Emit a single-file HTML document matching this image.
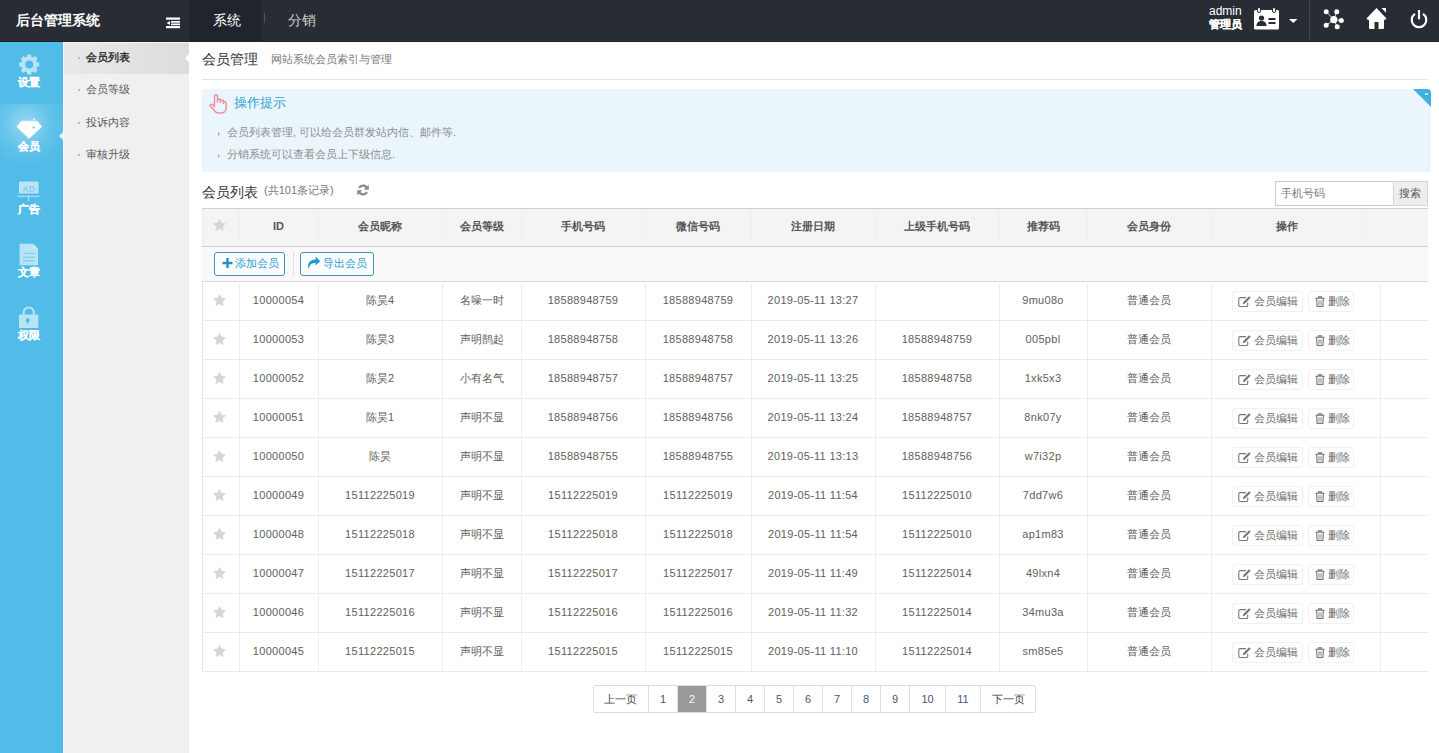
<!DOCTYPE html>
<html><head><meta charset="utf-8">
<style>
*{margin:0;padding:0;box-sizing:border-box}
html,body{width:1439px;height:753px;overflow:hidden;background:#fff;font-family:"Liberation Sans",sans-serif;font-size:12px;color:#555}
.a{position:absolute}
.t{position:absolute;white-space:nowrap;line-height:1}
.c{position:absolute;white-space:nowrap;text-align:center;line-height:39px;height:39px;font-size:11px;color:#606060}
.hc{position:absolute;white-space:nowrap;text-align:center;line-height:35px;height:37px;font-size:11px;color:#555;font-weight:bold}
.vl{position:absolute;width:1px;background:#eeeeee}
.hl{position:absolute;height:1px;background:#ebebeb}
.ob{position:absolute;height:21px;border:1px solid #f1f1f1;border-radius:3px;line-height:19px;font-size:11px;color:#6a6a6a;white-space:nowrap;background:#fff}
.ob svg{position:absolute}
.pg{position:absolute;top:686px;height:26px;line-height:26px;text-align:center;font-size:11px;color:#4a5875;border-left:1px solid #ddd}
</style></head><body>

<div class="a" style="left:0;top:0;width:1439px;height:42px;background:#272c35">
<div class="t" style="left:16px;top:13px;font-size:14px;font-weight:bold;color:#fff">后台管理系统</div>
<svg class="a" style="left:166px;top:17px" width="15" height="12" viewBox="0 0 15 12"><rect x="0" y="0.5" width="14" height="2.2" fill="#fff"/><rect x="5" y="4" width="9" height="1.7" fill="#fff"/><rect x="5" y="6.5" width="9" height="1.7" fill="#fff"/><rect x="0" y="9" width="14" height="2.2" fill="#fff"/><path d="M0.5 6L4 4v4z" fill="#fff"/></svg>
<div class="a" style="left:190px;top:0;width:71px;height:42px;background:#20252d"></div>
<div class="a" style="left:0;top:41px;width:1439px;height:1px;background:#1d2128"></div>
<div class="t" style="left:213px;top:13px;font-size:14px;color:#fff">系统</div>
<div class="a" style="left:264px;top:13px;width:1px;height:10px;background:#4e545d"></div>
<div class="t" style="left:288px;top:13px;font-size:14px;color:#ccc">分销</div>
<div class="t" style="left:1209px;top:5px;font-size:12px;color:#fff;font-family:'Liberation Sans'">admin</div>
<div class="t" style="left:1209px;top:19px;font-size:11px;font-weight:bold;-webkit-text-stroke:0.3px #fff;color:#fff">管理员</div>
<svg class="a" style="left:1254px;top:7px" width="25" height="23" viewBox="0 0 25 23"><path d="M1.5 3h22a1.5 1.5 0 0 1 1.5 1.5v16.5a1.5 1.5 0 0 1-1.5 1.5h-22A1.5 1.5 0 0 1 0 21V4.5A1.5 1.5 0 0 1 1.5 3z" fill="#fff"/><rect x="3.5" y="0.5" width="3" height="5" rx="1.5" fill="#fff" stroke="#272c35" stroke-width="1"/><rect x="18.5" y="0.5" width="3" height="5" rx="1.5" fill="#fff" stroke="#272c35" stroke-width="1"/><circle cx="7.5" cy="11" r="2.6" fill="#272c35"/><path d="M2.5 19c0-3.5 2-5 5-5s5 1.5 5 5z" fill="#272c35"/><rect x="14.5" y="11" width="7" height="2" fill="#272c35"/><rect x="14.5" y="15" width="7" height="2" fill="#272c35"/></svg>
<svg class="a" style="left:1289px;top:19px" width="9" height="4" viewBox="0 0 9 4"><path d="M0 0h8.5L4.25 4z" fill="#fff"/></svg>
<div class="a" style="left:1309px;top:0;width:1px;height:40px;background:#3e444d"></div>
<svg class="a" style="left:1322px;top:9px" width="23" height="22" viewBox="0 0 23 22"><g stroke="#fff" stroke-width="0.8"><line x1="11.8" y1="10.7" x2="4.2" y2="2.7"/><line x1="11.8" y1="10.7" x2="14.8" y2="2.7"/><line x1="11.8" y1="10.7" x2="19.3" y2="11.6"/><line x1="11.8" y1="10.7" x2="4.2" y2="16.3"/><line x1="11.8" y1="10.7" x2="15.2" y2="17.7"/></g><g fill="#fff"><circle cx="11.8" cy="10.7" r="3.6"/><circle cx="4.2" cy="2.7" r="2.5"/><circle cx="14.8" cy="2.7" r="2.5"/><circle cx="19.3" cy="11.6" r="2.5"/><circle cx="4.2" cy="16.3" r="2.5"/><circle cx="15.2" cy="17.7" r="2.5"/></g></svg>
<svg class="a" style="left:1366px;top:7px" width="22" height="23" viewBox="0 0 22 23"><path d="M10.5 1L0.5 11.5l1.8 1.8L3 12.6V21a1 1 0 0 0 1 1h4.5v-7h4v7H17a1 1 0 0 0 1-1v-8.4l0.7 0.7 1.8-1.8z" fill="#fff"/><path d="M15.5 1h4.5v4.8z" fill="#fff"/></svg>
<svg class="a" style="left:1410px;top:10px" width="18" height="19" viewBox="0 0 18 19"><path d="M5 3.8A7.3 7.3 0 1 0 13 3.8" fill="none" stroke="#fff" stroke-width="2.2"/><line x1="9" y1="0.5" x2="9" y2="8.5" stroke="#fff" stroke-width="2.2" stroke-linecap="round"/></svg>
</div>

<div class="a" style="left:0;top:42px;width:63px;height:711px;background:#50bce7"></div>
<div class="a" style="left:0;top:104px;width:63px;height:63px;background:radial-gradient(ellipse 42px 44px at 26px 20px,rgba(255,255,255,0.42),rgba(255,255,255,0.12) 55%,rgba(255,255,255,0) 100%)"></div>
<div class="a" style="left:59px;top:132px;width:0;height:0;border-top:4px solid transparent;border-bottom:4px solid transparent;border-right:4px solid #f0f0f0"></div>
<svg class="a" style="left:0;top:0" width="63" height="360" viewBox="0 0 63 360"><path fill="rgba(255,255,255,0.6)" fill-rule="evenodd" d="M36.88 62.27 L39.20 62.51 L39.20 66.49 L36.88 66.73 L36.21 68.35 L37.68 70.17 L34.87 72.98 L33.05 71.51 L31.43 72.18 L31.19 74.50 L27.21 74.50 L26.97 72.18 L25.35 71.51 L23.53 72.98 L20.72 70.17 L22.19 68.35 L21.52 66.73 L19.20 66.49 L19.20 62.51 L21.52 62.27 L22.19 60.65 L20.72 58.83 L23.53 56.02 L25.35 57.49 L26.97 56.82 L27.21 54.50 L31.19 54.50 L31.43 56.82 L33.05 57.49 L34.87 56.02 L37.68 58.83 L36.21 60.65Z M33.20 64.50 A4.0 4.0 0 1 0 25.20 64.50 A4.0 4.0 0 1 0 33.20 64.50Z"/><path d="M21.4 121.2H37.4L41.6 126.7L29.1 138.4L16.8 126.7Z" fill="#fff" stroke="#fff" stroke-width="0.6" stroke-linejoin="round"/><path d="M33.7 125.3L34.3 126.8L35.8 127.4L34.3 128L33.7 129.5L33.1 128L31.6 127.4L33.1 126.8Z" fill="#8fd0ee"/><circle cx="34.2" cy="119.2" r="1.1" fill="rgba(255,255,255,0.85)"/><rect x="19" y="181.6" width="19.6" height="12" rx="0.8" fill="rgba(255,255,255,0.6)"/><rect x="17.6" y="195.7" width="22" height="1.1" fill="rgba(255,255,255,0.6)"/><rect x="28.1" y="196.5" width="1.1" height="4.5" fill="rgba(255,255,255,0.6)"/><text x="28.8" y="191.6" font-family="Liberation Sans" font-weight="bold" font-size="8.6" text-anchor="middle" fill="#50bce7" fill-opacity="0.55">AD</text><path d="M19.6 243.8H33L38 248.8V265.2H19.6Z" fill="rgba(255,255,255,0.6)"/><path d="M33 243.8V248.8H38Z" fill="rgba(255,255,255,0.35)"/><rect x="23" y="252.8" width="11.8" height="1.3" fill="#50bce7" fill-opacity="0.55"/><rect x="23" y="256.6" width="11.8" height="1.3" fill="#50bce7" fill-opacity="0.55"/><rect x="23" y="260.2" width="11.8" height="1.3" fill="#50bce7" fill-opacity="0.55"/><path d="M23.6 314.6V312.6A5.1 5.1 0 0 1 33.8 312.6V314.6" fill="none" stroke="rgba(255,255,255,0.6)" stroke-width="2.2"/><path fill="rgba(255,255,255,0.6)" fill-rule="evenodd" d="M19 314.6H38.3V328H19Z M27.8 318.6A1.8 1.8 0 1 0 27.81 318.6Z"/><path d="M26.2 320L29.4 320L28.7 324.6L26.9 324.6Z" fill="#50bce7" fill-opacity="0.5"/><circle cx="27.8" cy="320" r="1.9" fill="#50bce7" fill-opacity="0.5"/></svg>
<div class="t" style="left:18px;top:77px;font-size:11px;font-weight:bold;-webkit-text-stroke:0.15px #fff;color:#fff">设置</div>
<div class="t" style="left:18px;top:141px;font-size:11px;font-weight:bold;-webkit-text-stroke:0.15px #fff;color:#fff">会员</div>
<div class="t" style="left:18px;top:204px;font-size:11px;font-weight:bold;-webkit-text-stroke:0.15px #fff;color:#fff">广告</div>
<div class="t" style="left:18px;top:267px;font-size:11px;font-weight:bold;-webkit-text-stroke:0.15px #fff;color:#fff">文章</div>
<div class="t" style="left:18px;top:330px;font-size:11px;font-weight:bold;-webkit-text-stroke:0.15px #fff;color:#fff">权限</div>
<div class="a" style="left:63px;top:42px;width:126px;height:711px;background:#f0f0f0"></div>
<div class="a" style="left:63px;top:42px;width:126px;height:32px;background:linear-gradient(90deg,#e9e9e9,#dcdcdc)"></div>
<div class="a" style="left:63px;top:42px;width:126px;height:1px;background:#f6f6f6"></div>
<div class="a" style="left:63px;top:42px;width:1px;height:711px;background:#f7f7f7"></div>
<div class="a" style="left:185px;top:54px;width:0;height:0;border-top:4px solid transparent;border-bottom:4px solid transparent;border-right:4px solid #fff"></div>
<div class="a" style="left:78px;top:57.0px;width:2px;height:2px;background:#bbb"></div>
<div class="t" style="left:86px;top:52.0px;font-size:11px;font-weight:bold;color:#333">会员列表</div>
<div class="a" style="left:78px;top:89.3px;width:2px;height:2px;background:#bbb"></div>
<div class="t" style="left:86px;top:84.3px;font-size:11px;color:#5a5a5a">会员等级</div>
<div class="a" style="left:78px;top:121.6px;width:2px;height:2px;background:#bbb"></div>
<div class="t" style="left:86px;top:116.6px;font-size:11px;color:#5a5a5a">投诉内容</div>
<div class="a" style="left:78px;top:153.9px;width:2px;height:2px;background:#bbb"></div>
<div class="t" style="left:86px;top:148.9px;font-size:11px;color:#5a5a5a">审核升级</div>
<div class="t" style="left:202px;top:52px;font-size:14px;color:#333">会员管理</div>
<div class="t" style="left:271px;top:54px;font-size:11px;color:#777">网站系统会员索引与管理</div>
<div class="a" style="left:202px;top:79px;width:1226px;height:1px;background:#e5e5e5"></div>
<div class="a" style="left:202px;top:89px;width:1229px;height:83px;background:#eaf6fc;border-radius:4px;overflow:hidden"><div class="a" style="right:0;top:0;width:0;height:0;border-top:18px solid #3fb3e0;border-left:18px solid transparent"></div><div class="a" style="left:1223px;top:4px;width:3px;height:2px;background:#bfe6f5"></div></div>
<svg class="a" style="left:209px;top:94px" width="18" height="20" viewBox="0 0 18 20"><path d="M5.5 11V2.5a1.5 1.5 0 0 1 3 0V8m0 0V6.5a1.5 1.5 0 0 1 3 0V8.5m0-1a1.5 1.5 0 0 1 3 0V9.5m0-0.5a1.3 1.3 0 0 1 2.6 0V14c0 3-2.2 5-5 5h-2.5c-2 0-3.3-1-4.3-2.5L1.3 12.3a1.4 1.4 0 0 1 2.2-1.7L5.5 13" fill="none" stroke="#f08a9a" stroke-width="1.4" stroke-linejoin="round" stroke-linecap="round"/></svg>
<div class="t" style="left:234px;top:96px;font-size:13px;color:#2b9fd3">操作提示</div>
<div class="a" style="left:218px;top:132px;width:0;height:0;border-top:2px solid transparent;border-bottom:2px solid transparent;border-left:2px solid #f08a9a"></div>
<div class="a" style="left:218px;top:154px;width:0;height:0;border-top:2px solid transparent;border-bottom:2px solid transparent;border-left:2px solid #f08a9a"></div>
<div class="t" style="left:227px;top:127px;font-size:11px;color:#8c8c8c">会员列表管理, 可以给会员群发站内信、邮件等.</div>
<div class="t" style="left:227px;top:149px;font-size:11px;color:#8c8c8c">分销系统可以查看会员上下级信息.</div>
<div class="t" style="left:202px;top:185px;font-size:14px;color:#333">会员列表</div>
<div class="t" style="left:264px;top:185px;font-size:11px;color:#777">(共101条记录)</div>
<svg class="a" style="left:357px;top:184px" width="12" height="12" viewBox="0 0 12 12"><path d="M10.2 4.6A4.6 4.6 0 0 0 2 3.8M1.8 7.4A4.6 4.6 0 0 0 10 8.2" fill="none" stroke="#8a8a8a" stroke-width="2.2"/><path d="M11.8 0.8v5H6.8z M0.2 11.2v-5h5z" fill="#8a8a8a"/></svg>
<div class="a" style="left:1275px;top:181px;width:119px;height:25px;border:1px solid #cacaca;background:#fff"></div>
<div class="t" style="left:1281px;top:188px;font-size:11px;color:#777">手机号码</div>
<div class="a" style="left:1393px;top:181px;width:35px;height:25px;border:1px solid #d5d5d5;background:#eee"></div>
<div class="t" style="left:1399px;top:188px;font-size:11px;color:#555">搜索</div>
<div class="a" style="left:202px;top:208px;width:1226px;height:1px;background:#cfcfcf"></div>
<div class="a" style="left:202px;top:209px;width:1226px;height:37px;background:#f4f4f4"></div>
<div class="a" style="left:202px;top:246px;width:1226px;height:1px;background:#cfcfcf"></div>
<div class="a" style="left:213px;top:219px"><svg width="13" height="12" viewBox="0 0 24 23" style="display:block"><path d="M12 0.8l3.4 7 7.7 1.1-5.6 5.4 1.3 7.6L12 18.3l-6.8 3.6 1.3-7.6L0.9 8.9l7.7-1.1z" fill="#d6d6d6" stroke="#d6d6d6" stroke-width="1.6" stroke-linejoin="round"/></svg></div>
<div class="vl" style="left:239px;top:209px;height:37px;background:#efefef"></div>
<div class="hc" style="left:239px;top:209px;width:79px">ID</div>
<div class="vl" style="left:318px;top:209px;height:37px;background:#efefef"></div>
<div class="hc" style="left:318px;top:209px;width:124px">会员昵称</div>
<div class="vl" style="left:442px;top:209px;height:37px;background:#efefef"></div>
<div class="hc" style="left:442px;top:209px;width:79px">会员等级</div>
<div class="vl" style="left:521px;top:209px;height:37px;background:#efefef"></div>
<div class="hc" style="left:521px;top:209px;width:124px">手机号码</div>
<div class="vl" style="left:645px;top:209px;height:37px;background:#efefef"></div>
<div class="hc" style="left:645px;top:209px;width:106px">微信号码</div>
<div class="vl" style="left:751px;top:209px;height:37px;background:#efefef"></div>
<div class="hc" style="left:751px;top:209px;width:124px">注册日期</div>
<div class="vl" style="left:875px;top:209px;height:37px;background:#efefef"></div>
<div class="hc" style="left:875px;top:209px;width:124px">上级手机号码</div>
<div class="vl" style="left:999px;top:209px;height:37px;background:#efefef"></div>
<div class="hc" style="left:999px;top:209px;width:88px">推荐码</div>
<div class="vl" style="left:1087px;top:209px;height:37px;background:#efefef"></div>
<div class="hc" style="left:1087px;top:209px;width:124px">会员身份</div>
<div class="vl" style="left:1211px;top:209px;height:37px;background:#efefef"></div>
<div class="hc" style="left:1211px;top:209px;width:151px">操作</div>
<div class="vl" style="left:1362px;top:209px;height:37px;background:#efefef"></div>
<div class="vl" style="left:202px;top:209px;height:37px;background:#eaeaea"></div>
<div class="a" style="left:202px;top:247px;width:1226px;height:34px;background:#f9f9f9"></div>
<div class="a" style="left:202px;top:281px;width:1226px;height:1px;background:#dadada"></div>
<div class="a" style="left:214px;top:252px;width:71px;height:24px;border:1px solid #4592b5;border-radius:3px;background:#fdfeff"></div>
<svg class="a" style="left:221.5px;top:258px" width="11" height="10" viewBox="0 0 11 10"><path d="M4.3 0h2.4v3.8h3.8v2.4H6.7V10H4.3V6.2H0.5V3.8h3.8z" fill="#1f92c9"/></svg>
<div class="t" style="left:235px;top:258px;font-size:11px;color:#2d9bcf">添加会员</div>
<div class="a" style="left:293px;top:252px;width:1px;height:24px;border-left:1px dotted #ccc"></div>
<div class="a" style="left:300px;top:252px;width:74px;height:24px;border:1px solid #4592b5;border-radius:3px;background:#fdfeff"></div>
<svg class="a" style="left:307px;top:256px" width="14" height="14" viewBox="0 0 14 14"><path d="M8.6 0.6L13.3 5.2L8.6 9.6V7.1C5.6 7 3.5 7.8 2.6 10.2C2.2 11.2 1.9 12.2 1.6 13C0.6 9.8 0.7 3.6 8.6 3.4Z" fill="#1f9ad0"/></svg>
<div class="t" style="left:323px;top:258px;font-size:11px;color:#2d9bcf">导出会员</div>
<div class="hl" style="left:202px;top:320px;width:1226px"></div>
<div class="a" style="left:213px;top:294px"><svg width="13" height="12" viewBox="0 0 24 23" style="display:block"><path d="M12 0.8l3.4 7 7.7 1.1-5.6 5.4 1.3 7.6L12 18.3l-6.8 3.6 1.3-7.6L0.9 8.9l7.7-1.1z" fill="#d6d6d6" stroke="#d6d6d6" stroke-width="1.6" stroke-linejoin="round"/></svg></div>
<div class="c" style="left:239px;top:281px;width:79px;letter-spacing:0.3px;">10000054</div>
<div class="c" style="left:318px;top:281px;width:124px;">陈昊4</div>
<div class="c" style="left:442px;top:281px;width:79px;">名噪一时</div>
<div class="c" style="left:521px;top:281px;width:124px;letter-spacing:0.3px;">18588948759</div>
<div class="c" style="left:645px;top:281px;width:106px;letter-spacing:0.3px;">18588948759</div>
<div class="c" style="left:751px;top:281px;width:124px;letter-spacing:0.3px;">2019-05-11 13:27</div>
<div class="c" style="left:999px;top:281px;width:88px;letter-spacing:0.3px;">9mu08o</div>
<div class="c" style="left:1087px;top:281px;width:124px;">普通会员</div>
<div class="ob" style="left:1232px;top:291px;width:71px"><span style="position:absolute;left:5px;top:4px;line-height:0"><svg width="13" height="11" viewBox="0 0 13 11"><path d="M8 1.6H2.1A1.3 1.3 0 0 0 0.8 2.9V9.2A1.3 1.3 0 0 0 2.1 10.5H8.4A1.3 1.3 0 0 0 9.7 9.2V6.4" fill="none" stroke="#777" stroke-width="1.1"/><path d="M11.1 0.2L12.7 1.8L7 7.5L4.8 8.2L5.4 6Z" fill="#777"/></svg></span><span style="position:absolute;left:21px;top:0">会员编辑</span></div>
<div class="ob" style="left:1308px;top:291px;width:46px"><span style="position:absolute;left:6px;top:4px;line-height:0"><svg width="10" height="11" viewBox="0 0 10 11"><path d="M0.4 2.3H9.6M3.4 2.3V0.9H6.6V2.3M1.6 2.3L2.1 10.4H7.9L8.4 2.3" fill="none" stroke="#777" stroke-width="1.1"/><path d="M4 4.2V8.8M6 4.2V8.8" stroke="#777" stroke-width="0.9"/></svg></span><span style="position:absolute;left:19px;top:0">删除</span></div>
<div class="hl" style="left:202px;top:359px;width:1226px"></div>
<div class="a" style="left:213px;top:333px"><svg width="13" height="12" viewBox="0 0 24 23" style="display:block"><path d="M12 0.8l3.4 7 7.7 1.1-5.6 5.4 1.3 7.6L12 18.3l-6.8 3.6 1.3-7.6L0.9 8.9l7.7-1.1z" fill="#d6d6d6" stroke="#d6d6d6" stroke-width="1.6" stroke-linejoin="round"/></svg></div>
<div class="c" style="left:239px;top:320px;width:79px;letter-spacing:0.3px;">10000053</div>
<div class="c" style="left:318px;top:320px;width:124px;">陈昊3</div>
<div class="c" style="left:442px;top:320px;width:79px;">声明鹊起</div>
<div class="c" style="left:521px;top:320px;width:124px;letter-spacing:0.3px;">18588948758</div>
<div class="c" style="left:645px;top:320px;width:106px;letter-spacing:0.3px;">18588948758</div>
<div class="c" style="left:751px;top:320px;width:124px;letter-spacing:0.3px;">2019-05-11 13:26</div>
<div class="c" style="left:875px;top:320px;width:124px;letter-spacing:0.3px;">18588948759</div>
<div class="c" style="left:999px;top:320px;width:88px;letter-spacing:0.3px;">005pbl</div>
<div class="c" style="left:1087px;top:320px;width:124px;">普通会员</div>
<div class="ob" style="left:1232px;top:330px;width:71px"><span style="position:absolute;left:5px;top:4px;line-height:0"><svg width="13" height="11" viewBox="0 0 13 11"><path d="M8 1.6H2.1A1.3 1.3 0 0 0 0.8 2.9V9.2A1.3 1.3 0 0 0 2.1 10.5H8.4A1.3 1.3 0 0 0 9.7 9.2V6.4" fill="none" stroke="#777" stroke-width="1.1"/><path d="M11.1 0.2L12.7 1.8L7 7.5L4.8 8.2L5.4 6Z" fill="#777"/></svg></span><span style="position:absolute;left:21px;top:0">会员编辑</span></div>
<div class="ob" style="left:1308px;top:330px;width:46px"><span style="position:absolute;left:6px;top:4px;line-height:0"><svg width="10" height="11" viewBox="0 0 10 11"><path d="M0.4 2.3H9.6M3.4 2.3V0.9H6.6V2.3M1.6 2.3L2.1 10.4H7.9L8.4 2.3" fill="none" stroke="#777" stroke-width="1.1"/><path d="M4 4.2V8.8M6 4.2V8.8" stroke="#777" stroke-width="0.9"/></svg></span><span style="position:absolute;left:19px;top:0">删除</span></div>
<div class="hl" style="left:202px;top:398px;width:1226px"></div>
<div class="a" style="left:213px;top:372px"><svg width="13" height="12" viewBox="0 0 24 23" style="display:block"><path d="M12 0.8l3.4 7 7.7 1.1-5.6 5.4 1.3 7.6L12 18.3l-6.8 3.6 1.3-7.6L0.9 8.9l7.7-1.1z" fill="#d6d6d6" stroke="#d6d6d6" stroke-width="1.6" stroke-linejoin="round"/></svg></div>
<div class="c" style="left:239px;top:359px;width:79px;letter-spacing:0.3px;">10000052</div>
<div class="c" style="left:318px;top:359px;width:124px;">陈昊2</div>
<div class="c" style="left:442px;top:359px;width:79px;">小有名气</div>
<div class="c" style="left:521px;top:359px;width:124px;letter-spacing:0.3px;">18588948757</div>
<div class="c" style="left:645px;top:359px;width:106px;letter-spacing:0.3px;">18588948757</div>
<div class="c" style="left:751px;top:359px;width:124px;letter-spacing:0.3px;">2019-05-11 13:25</div>
<div class="c" style="left:875px;top:359px;width:124px;letter-spacing:0.3px;">18588948758</div>
<div class="c" style="left:999px;top:359px;width:88px;letter-spacing:0.3px;">1xk5x3</div>
<div class="c" style="left:1087px;top:359px;width:124px;">普通会员</div>
<div class="ob" style="left:1232px;top:369px;width:71px"><span style="position:absolute;left:5px;top:4px;line-height:0"><svg width="13" height="11" viewBox="0 0 13 11"><path d="M8 1.6H2.1A1.3 1.3 0 0 0 0.8 2.9V9.2A1.3 1.3 0 0 0 2.1 10.5H8.4A1.3 1.3 0 0 0 9.7 9.2V6.4" fill="none" stroke="#777" stroke-width="1.1"/><path d="M11.1 0.2L12.7 1.8L7 7.5L4.8 8.2L5.4 6Z" fill="#777"/></svg></span><span style="position:absolute;left:21px;top:0">会员编辑</span></div>
<div class="ob" style="left:1308px;top:369px;width:46px"><span style="position:absolute;left:6px;top:4px;line-height:0"><svg width="10" height="11" viewBox="0 0 10 11"><path d="M0.4 2.3H9.6M3.4 2.3V0.9H6.6V2.3M1.6 2.3L2.1 10.4H7.9L8.4 2.3" fill="none" stroke="#777" stroke-width="1.1"/><path d="M4 4.2V8.8M6 4.2V8.8" stroke="#777" stroke-width="0.9"/></svg></span><span style="position:absolute;left:19px;top:0">删除</span></div>
<div class="hl" style="left:202px;top:437px;width:1226px"></div>
<div class="a" style="left:213px;top:411px"><svg width="13" height="12" viewBox="0 0 24 23" style="display:block"><path d="M12 0.8l3.4 7 7.7 1.1-5.6 5.4 1.3 7.6L12 18.3l-6.8 3.6 1.3-7.6L0.9 8.9l7.7-1.1z" fill="#d6d6d6" stroke="#d6d6d6" stroke-width="1.6" stroke-linejoin="round"/></svg></div>
<div class="c" style="left:239px;top:398px;width:79px;letter-spacing:0.3px;">10000051</div>
<div class="c" style="left:318px;top:398px;width:124px;">陈昊1</div>
<div class="c" style="left:442px;top:398px;width:79px;">声明不显</div>
<div class="c" style="left:521px;top:398px;width:124px;letter-spacing:0.3px;">18588948756</div>
<div class="c" style="left:645px;top:398px;width:106px;letter-spacing:0.3px;">18588948756</div>
<div class="c" style="left:751px;top:398px;width:124px;letter-spacing:0.3px;">2019-05-11 13:24</div>
<div class="c" style="left:875px;top:398px;width:124px;letter-spacing:0.3px;">18588948757</div>
<div class="c" style="left:999px;top:398px;width:88px;letter-spacing:0.3px;">8nk07y</div>
<div class="c" style="left:1087px;top:398px;width:124px;">普通会员</div>
<div class="ob" style="left:1232px;top:408px;width:71px"><span style="position:absolute;left:5px;top:4px;line-height:0"><svg width="13" height="11" viewBox="0 0 13 11"><path d="M8 1.6H2.1A1.3 1.3 0 0 0 0.8 2.9V9.2A1.3 1.3 0 0 0 2.1 10.5H8.4A1.3 1.3 0 0 0 9.7 9.2V6.4" fill="none" stroke="#777" stroke-width="1.1"/><path d="M11.1 0.2L12.7 1.8L7 7.5L4.8 8.2L5.4 6Z" fill="#777"/></svg></span><span style="position:absolute;left:21px;top:0">会员编辑</span></div>
<div class="ob" style="left:1308px;top:408px;width:46px"><span style="position:absolute;left:6px;top:4px;line-height:0"><svg width="10" height="11" viewBox="0 0 10 11"><path d="M0.4 2.3H9.6M3.4 2.3V0.9H6.6V2.3M1.6 2.3L2.1 10.4H7.9L8.4 2.3" fill="none" stroke="#777" stroke-width="1.1"/><path d="M4 4.2V8.8M6 4.2V8.8" stroke="#777" stroke-width="0.9"/></svg></span><span style="position:absolute;left:19px;top:0">删除</span></div>
<div class="hl" style="left:202px;top:476px;width:1226px"></div>
<div class="a" style="left:213px;top:450px"><svg width="13" height="12" viewBox="0 0 24 23" style="display:block"><path d="M12 0.8l3.4 7 7.7 1.1-5.6 5.4 1.3 7.6L12 18.3l-6.8 3.6 1.3-7.6L0.9 8.9l7.7-1.1z" fill="#d6d6d6" stroke="#d6d6d6" stroke-width="1.6" stroke-linejoin="round"/></svg></div>
<div class="c" style="left:239px;top:437px;width:79px;letter-spacing:0.3px;">10000050</div>
<div class="c" style="left:318px;top:437px;width:124px;">陈昊</div>
<div class="c" style="left:442px;top:437px;width:79px;">声明不显</div>
<div class="c" style="left:521px;top:437px;width:124px;letter-spacing:0.3px;">18588948755</div>
<div class="c" style="left:645px;top:437px;width:106px;letter-spacing:0.3px;">18588948755</div>
<div class="c" style="left:751px;top:437px;width:124px;letter-spacing:0.3px;">2019-05-11 13:13</div>
<div class="c" style="left:875px;top:437px;width:124px;letter-spacing:0.3px;">18588948756</div>
<div class="c" style="left:999px;top:437px;width:88px;letter-spacing:0.3px;">w7i32p</div>
<div class="c" style="left:1087px;top:437px;width:124px;">普通会员</div>
<div class="ob" style="left:1232px;top:447px;width:71px"><span style="position:absolute;left:5px;top:4px;line-height:0"><svg width="13" height="11" viewBox="0 0 13 11"><path d="M8 1.6H2.1A1.3 1.3 0 0 0 0.8 2.9V9.2A1.3 1.3 0 0 0 2.1 10.5H8.4A1.3 1.3 0 0 0 9.7 9.2V6.4" fill="none" stroke="#777" stroke-width="1.1"/><path d="M11.1 0.2L12.7 1.8L7 7.5L4.8 8.2L5.4 6Z" fill="#777"/></svg></span><span style="position:absolute;left:21px;top:0">会员编辑</span></div>
<div class="ob" style="left:1308px;top:447px;width:46px"><span style="position:absolute;left:6px;top:4px;line-height:0"><svg width="10" height="11" viewBox="0 0 10 11"><path d="M0.4 2.3H9.6M3.4 2.3V0.9H6.6V2.3M1.6 2.3L2.1 10.4H7.9L8.4 2.3" fill="none" stroke="#777" stroke-width="1.1"/><path d="M4 4.2V8.8M6 4.2V8.8" stroke="#777" stroke-width="0.9"/></svg></span><span style="position:absolute;left:19px;top:0">删除</span></div>
<div class="hl" style="left:202px;top:515px;width:1226px"></div>
<div class="a" style="left:213px;top:489px"><svg width="13" height="12" viewBox="0 0 24 23" style="display:block"><path d="M12 0.8l3.4 7 7.7 1.1-5.6 5.4 1.3 7.6L12 18.3l-6.8 3.6 1.3-7.6L0.9 8.9l7.7-1.1z" fill="#d6d6d6" stroke="#d6d6d6" stroke-width="1.6" stroke-linejoin="round"/></svg></div>
<div class="c" style="left:239px;top:476px;width:79px;letter-spacing:0.3px;">10000049</div>
<div class="c" style="left:318px;top:476px;width:124px;letter-spacing:0.3px;">15112225019</div>
<div class="c" style="left:442px;top:476px;width:79px;">声明不显</div>
<div class="c" style="left:521px;top:476px;width:124px;letter-spacing:0.3px;">15112225019</div>
<div class="c" style="left:645px;top:476px;width:106px;letter-spacing:0.3px;">15112225019</div>
<div class="c" style="left:751px;top:476px;width:124px;letter-spacing:0.3px;">2019-05-11 11:54</div>
<div class="c" style="left:875px;top:476px;width:124px;letter-spacing:0.3px;">15112225010</div>
<div class="c" style="left:999px;top:476px;width:88px;letter-spacing:0.3px;">7dd7w6</div>
<div class="c" style="left:1087px;top:476px;width:124px;">普通会员</div>
<div class="ob" style="left:1232px;top:486px;width:71px"><span style="position:absolute;left:5px;top:4px;line-height:0"><svg width="13" height="11" viewBox="0 0 13 11"><path d="M8 1.6H2.1A1.3 1.3 0 0 0 0.8 2.9V9.2A1.3 1.3 0 0 0 2.1 10.5H8.4A1.3 1.3 0 0 0 9.7 9.2V6.4" fill="none" stroke="#777" stroke-width="1.1"/><path d="M11.1 0.2L12.7 1.8L7 7.5L4.8 8.2L5.4 6Z" fill="#777"/></svg></span><span style="position:absolute;left:21px;top:0">会员编辑</span></div>
<div class="ob" style="left:1308px;top:486px;width:46px"><span style="position:absolute;left:6px;top:4px;line-height:0"><svg width="10" height="11" viewBox="0 0 10 11"><path d="M0.4 2.3H9.6M3.4 2.3V0.9H6.6V2.3M1.6 2.3L2.1 10.4H7.9L8.4 2.3" fill="none" stroke="#777" stroke-width="1.1"/><path d="M4 4.2V8.8M6 4.2V8.8" stroke="#777" stroke-width="0.9"/></svg></span><span style="position:absolute;left:19px;top:0">删除</span></div>
<div class="hl" style="left:202px;top:554px;width:1226px"></div>
<div class="a" style="left:213px;top:528px"><svg width="13" height="12" viewBox="0 0 24 23" style="display:block"><path d="M12 0.8l3.4 7 7.7 1.1-5.6 5.4 1.3 7.6L12 18.3l-6.8 3.6 1.3-7.6L0.9 8.9l7.7-1.1z" fill="#d6d6d6" stroke="#d6d6d6" stroke-width="1.6" stroke-linejoin="round"/></svg></div>
<div class="c" style="left:239px;top:515px;width:79px;letter-spacing:0.3px;">10000048</div>
<div class="c" style="left:318px;top:515px;width:124px;letter-spacing:0.3px;">15112225018</div>
<div class="c" style="left:442px;top:515px;width:79px;">声明不显</div>
<div class="c" style="left:521px;top:515px;width:124px;letter-spacing:0.3px;">15112225018</div>
<div class="c" style="left:645px;top:515px;width:106px;letter-spacing:0.3px;">15112225018</div>
<div class="c" style="left:751px;top:515px;width:124px;letter-spacing:0.3px;">2019-05-11 11:54</div>
<div class="c" style="left:875px;top:515px;width:124px;letter-spacing:0.3px;">15112225010</div>
<div class="c" style="left:999px;top:515px;width:88px;letter-spacing:0.3px;">ap1m83</div>
<div class="c" style="left:1087px;top:515px;width:124px;">普通会员</div>
<div class="ob" style="left:1232px;top:525px;width:71px"><span style="position:absolute;left:5px;top:4px;line-height:0"><svg width="13" height="11" viewBox="0 0 13 11"><path d="M8 1.6H2.1A1.3 1.3 0 0 0 0.8 2.9V9.2A1.3 1.3 0 0 0 2.1 10.5H8.4A1.3 1.3 0 0 0 9.7 9.2V6.4" fill="none" stroke="#777" stroke-width="1.1"/><path d="M11.1 0.2L12.7 1.8L7 7.5L4.8 8.2L5.4 6Z" fill="#777"/></svg></span><span style="position:absolute;left:21px;top:0">会员编辑</span></div>
<div class="ob" style="left:1308px;top:525px;width:46px"><span style="position:absolute;left:6px;top:4px;line-height:0"><svg width="10" height="11" viewBox="0 0 10 11"><path d="M0.4 2.3H9.6M3.4 2.3V0.9H6.6V2.3M1.6 2.3L2.1 10.4H7.9L8.4 2.3" fill="none" stroke="#777" stroke-width="1.1"/><path d="M4 4.2V8.8M6 4.2V8.8" stroke="#777" stroke-width="0.9"/></svg></span><span style="position:absolute;left:19px;top:0">删除</span></div>
<div class="hl" style="left:202px;top:593px;width:1226px"></div>
<div class="a" style="left:213px;top:567px"><svg width="13" height="12" viewBox="0 0 24 23" style="display:block"><path d="M12 0.8l3.4 7 7.7 1.1-5.6 5.4 1.3 7.6L12 18.3l-6.8 3.6 1.3-7.6L0.9 8.9l7.7-1.1z" fill="#d6d6d6" stroke="#d6d6d6" stroke-width="1.6" stroke-linejoin="round"/></svg></div>
<div class="c" style="left:239px;top:554px;width:79px;letter-spacing:0.3px;">10000047</div>
<div class="c" style="left:318px;top:554px;width:124px;letter-spacing:0.3px;">15112225017</div>
<div class="c" style="left:442px;top:554px;width:79px;">声明不显</div>
<div class="c" style="left:521px;top:554px;width:124px;letter-spacing:0.3px;">15112225017</div>
<div class="c" style="left:645px;top:554px;width:106px;letter-spacing:0.3px;">15112225017</div>
<div class="c" style="left:751px;top:554px;width:124px;letter-spacing:0.3px;">2019-05-11 11:49</div>
<div class="c" style="left:875px;top:554px;width:124px;letter-spacing:0.3px;">15112225014</div>
<div class="c" style="left:999px;top:554px;width:88px;letter-spacing:0.3px;">49lxn4</div>
<div class="c" style="left:1087px;top:554px;width:124px;">普通会员</div>
<div class="ob" style="left:1232px;top:564px;width:71px"><span style="position:absolute;left:5px;top:4px;line-height:0"><svg width="13" height="11" viewBox="0 0 13 11"><path d="M8 1.6H2.1A1.3 1.3 0 0 0 0.8 2.9V9.2A1.3 1.3 0 0 0 2.1 10.5H8.4A1.3 1.3 0 0 0 9.7 9.2V6.4" fill="none" stroke="#777" stroke-width="1.1"/><path d="M11.1 0.2L12.7 1.8L7 7.5L4.8 8.2L5.4 6Z" fill="#777"/></svg></span><span style="position:absolute;left:21px;top:0">会员编辑</span></div>
<div class="ob" style="left:1308px;top:564px;width:46px"><span style="position:absolute;left:6px;top:4px;line-height:0"><svg width="10" height="11" viewBox="0 0 10 11"><path d="M0.4 2.3H9.6M3.4 2.3V0.9H6.6V2.3M1.6 2.3L2.1 10.4H7.9L8.4 2.3" fill="none" stroke="#777" stroke-width="1.1"/><path d="M4 4.2V8.8M6 4.2V8.8" stroke="#777" stroke-width="0.9"/></svg></span><span style="position:absolute;left:19px;top:0">删除</span></div>
<div class="hl" style="left:202px;top:632px;width:1226px"></div>
<div class="a" style="left:213px;top:606px"><svg width="13" height="12" viewBox="0 0 24 23" style="display:block"><path d="M12 0.8l3.4 7 7.7 1.1-5.6 5.4 1.3 7.6L12 18.3l-6.8 3.6 1.3-7.6L0.9 8.9l7.7-1.1z" fill="#d6d6d6" stroke="#d6d6d6" stroke-width="1.6" stroke-linejoin="round"/></svg></div>
<div class="c" style="left:239px;top:593px;width:79px;letter-spacing:0.3px;">10000046</div>
<div class="c" style="left:318px;top:593px;width:124px;letter-spacing:0.3px;">15112225016</div>
<div class="c" style="left:442px;top:593px;width:79px;">声明不显</div>
<div class="c" style="left:521px;top:593px;width:124px;letter-spacing:0.3px;">15112225016</div>
<div class="c" style="left:645px;top:593px;width:106px;letter-spacing:0.3px;">15112225016</div>
<div class="c" style="left:751px;top:593px;width:124px;letter-spacing:0.3px;">2019-05-11 11:32</div>
<div class="c" style="left:875px;top:593px;width:124px;letter-spacing:0.3px;">15112225014</div>
<div class="c" style="left:999px;top:593px;width:88px;letter-spacing:0.3px;">34mu3a</div>
<div class="c" style="left:1087px;top:593px;width:124px;">普通会员</div>
<div class="ob" style="left:1232px;top:603px;width:71px"><span style="position:absolute;left:5px;top:4px;line-height:0"><svg width="13" height="11" viewBox="0 0 13 11"><path d="M8 1.6H2.1A1.3 1.3 0 0 0 0.8 2.9V9.2A1.3 1.3 0 0 0 2.1 10.5H8.4A1.3 1.3 0 0 0 9.7 9.2V6.4" fill="none" stroke="#777" stroke-width="1.1"/><path d="M11.1 0.2L12.7 1.8L7 7.5L4.8 8.2L5.4 6Z" fill="#777"/></svg></span><span style="position:absolute;left:21px;top:0">会员编辑</span></div>
<div class="ob" style="left:1308px;top:603px;width:46px"><span style="position:absolute;left:6px;top:4px;line-height:0"><svg width="10" height="11" viewBox="0 0 10 11"><path d="M0.4 2.3H9.6M3.4 2.3V0.9H6.6V2.3M1.6 2.3L2.1 10.4H7.9L8.4 2.3" fill="none" stroke="#777" stroke-width="1.1"/><path d="M4 4.2V8.8M6 4.2V8.8" stroke="#777" stroke-width="0.9"/></svg></span><span style="position:absolute;left:19px;top:0">删除</span></div>
<div class="hl" style="left:202px;top:671px;width:1226px"></div>
<div class="a" style="left:213px;top:645px"><svg width="13" height="12" viewBox="0 0 24 23" style="display:block"><path d="M12 0.8l3.4 7 7.7 1.1-5.6 5.4 1.3 7.6L12 18.3l-6.8 3.6 1.3-7.6L0.9 8.9l7.7-1.1z" fill="#d6d6d6" stroke="#d6d6d6" stroke-width="1.6" stroke-linejoin="round"/></svg></div>
<div class="c" style="left:239px;top:632px;width:79px;letter-spacing:0.3px;">10000045</div>
<div class="c" style="left:318px;top:632px;width:124px;letter-spacing:0.3px;">15112225015</div>
<div class="c" style="left:442px;top:632px;width:79px;">声明不显</div>
<div class="c" style="left:521px;top:632px;width:124px;letter-spacing:0.3px;">15112225015</div>
<div class="c" style="left:645px;top:632px;width:106px;letter-spacing:0.3px;">15112225015</div>
<div class="c" style="left:751px;top:632px;width:124px;letter-spacing:0.3px;">2019-05-11 11:10</div>
<div class="c" style="left:875px;top:632px;width:124px;letter-spacing:0.3px;">15112225014</div>
<div class="c" style="left:999px;top:632px;width:88px;letter-spacing:0.3px;">sm85e5</div>
<div class="c" style="left:1087px;top:632px;width:124px;">普通会员</div>
<div class="ob" style="left:1232px;top:642px;width:71px"><span style="position:absolute;left:5px;top:4px;line-height:0"><svg width="13" height="11" viewBox="0 0 13 11"><path d="M8 1.6H2.1A1.3 1.3 0 0 0 0.8 2.9V9.2A1.3 1.3 0 0 0 2.1 10.5H8.4A1.3 1.3 0 0 0 9.7 9.2V6.4" fill="none" stroke="#777" stroke-width="1.1"/><path d="M11.1 0.2L12.7 1.8L7 7.5L4.8 8.2L5.4 6Z" fill="#777"/></svg></span><span style="position:absolute;left:21px;top:0">会员编辑</span></div>
<div class="ob" style="left:1308px;top:642px;width:46px"><span style="position:absolute;left:6px;top:4px;line-height:0"><svg width="10" height="11" viewBox="0 0 10 11"><path d="M0.4 2.3H9.6M3.4 2.3V0.9H6.6V2.3M1.6 2.3L2.1 10.4H7.9L8.4 2.3" fill="none" stroke="#777" stroke-width="1.1"/><path d="M4 4.2V8.8M6 4.2V8.8" stroke="#777" stroke-width="0.9"/></svg></span><span style="position:absolute;left:19px;top:0">删除</span></div>
<div class="vl" style="left:239px;top:281px;height:390px"></div>
<div class="vl" style="left:318px;top:281px;height:390px"></div>
<div class="vl" style="left:442px;top:281px;height:390px"></div>
<div class="vl" style="left:521px;top:281px;height:390px"></div>
<div class="vl" style="left:645px;top:281px;height:390px"></div>
<div class="vl" style="left:751px;top:281px;height:390px"></div>
<div class="vl" style="left:875px;top:281px;height:390px"></div>
<div class="vl" style="left:999px;top:281px;height:390px"></div>
<div class="vl" style="left:1087px;top:281px;height:390px"></div>
<div class="vl" style="left:1211px;top:281px;height:390px"></div>
<div class="vl" style="left:1380px;top:281px;height:390px"></div>
<div class="vl" style="left:202px;top:281px;height:391px;background:#e4e4e4"></div>
<div class="a" style="left:593px;top:685px;width:443px;height:28px;border:1px solid #ddd;border-radius:2px;background:#fff"></div>
<div class="pg" style="left:593px;width:55px;border-left:none;color:#444;">上一页</div>
<div class="pg" style="left:648px;width:29px;color:#555;">1</div>
<div class="pg" style="left:677px;width:29px;background:#999;color:#fff;">2</div>
<div class="pg" style="left:706px;width:29px;">3</div>
<div class="pg" style="left:735px;width:29px;">4</div>
<div class="pg" style="left:764px;width:29px;">5</div>
<div class="pg" style="left:793px;width:29px;">6</div>
<div class="pg" style="left:822px;width:29px;">7</div>
<div class="pg" style="left:851px;width:29px;">8</div>
<div class="pg" style="left:880px;width:29px;">9</div>
<div class="pg" style="left:909px;width:36px;">10</div>
<div class="pg" style="left:945px;width:35px;">11</div>
<div class="pg" style="left:980px;width:56px;color:#444;">下一页</div>
</body></html>
